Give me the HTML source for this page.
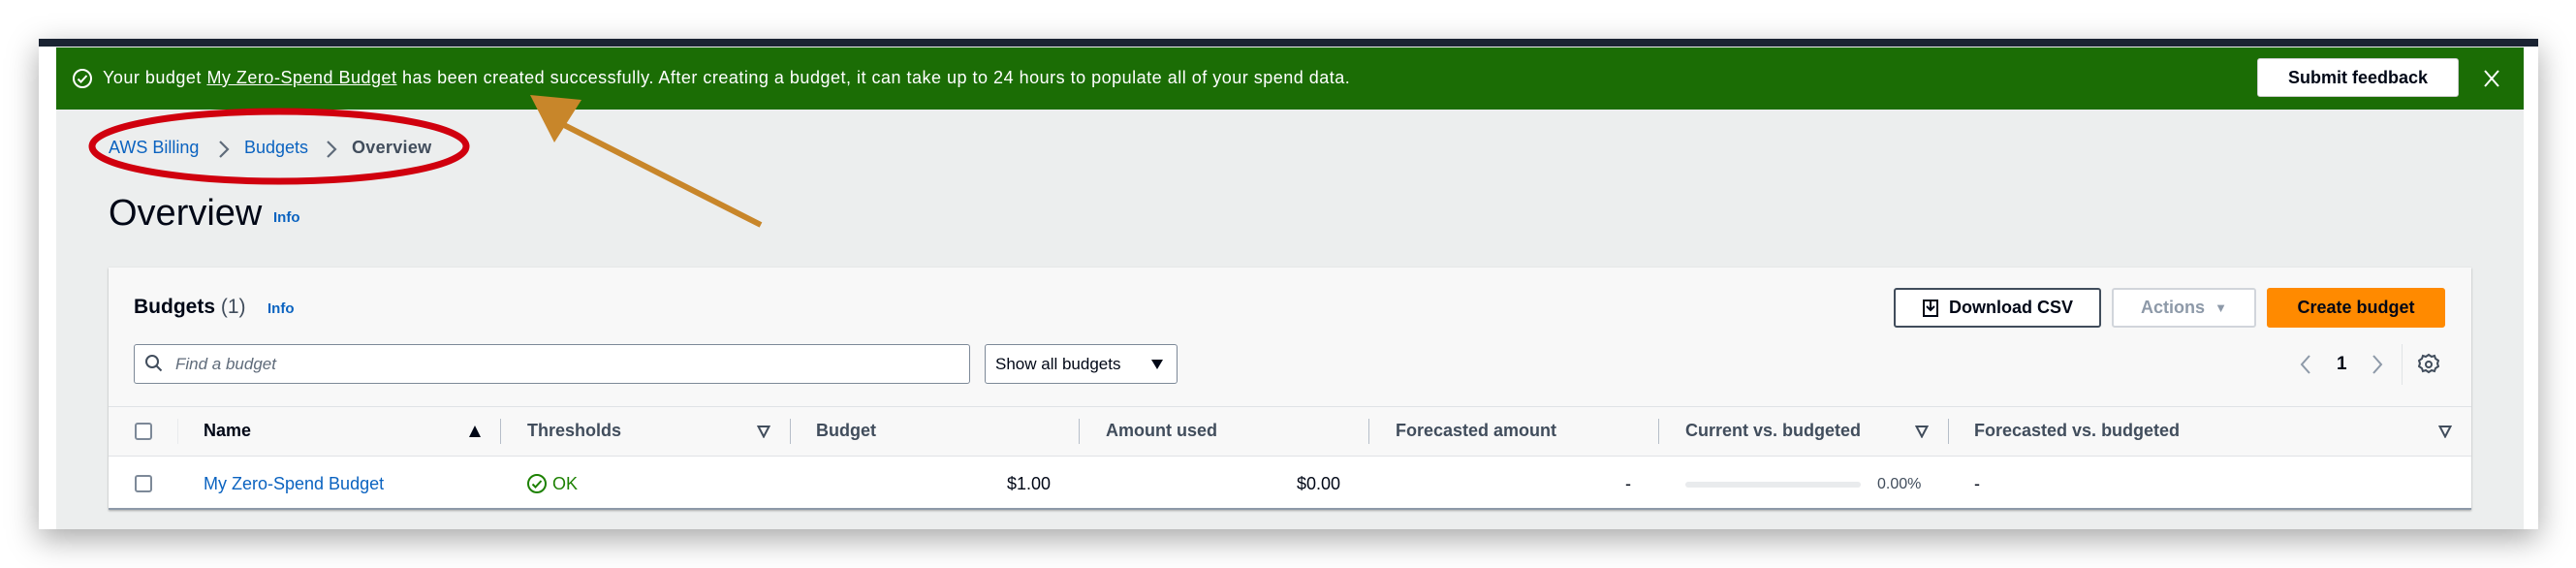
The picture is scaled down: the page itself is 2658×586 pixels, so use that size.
<!DOCTYPE html>
<html><head><meta charset="utf-8"><style>
*{margin:0;padding:0;box-sizing:border-box}
body{width:2658px;height:586px;background:#fff;position:relative;overflow:hidden;font-family:"Liberation Sans",sans-serif;color:#000716}
.a{position:absolute;white-space:nowrap}
.win{left:40px;top:40px;width:2579px;height:506px;background:#fff;box-shadow:0 10px 30px rgba(0,0,0,.35)}
.lk{color:#0b63c0}
.th{font-size:18px;font-weight:bold;color:#414d5c;top:434px}
.dv{width:1px;height:26px;background:#b6bec9;top:432px}
.btn{border:2px solid #414d5c;border-radius:3px;font-size:18px;font-weight:bold;display:flex;align-items:center;justify-content:center}
</style></head><body>
<div class="a win"></div>
<div class="a" style="left:40px;top:40px;width:2579px;height:8px;background:#1a2332"></div>
<div class="a" style="left:58px;top:48px;width:2546px;height:498px;background:#eceeee"></div>
<div class="a" style="left:2604px;top:48px;width:15px;height:498px;background:#fff"></div>
<div class="a" style="left:58px;top:49px;width:2546px;height:64px;background:#1b6d05"></div>
<svg class="a" style="left:74px;top:70px" width="22" height="22" viewBox="0 0 22 22"><circle cx="11" cy="11" r="9" fill="none" stroke="#fff" stroke-width="2"/><path d="M6.5 11.5l3 3 6-6.5" fill="none" stroke="#fff" stroke-width="2"/></svg>
<div class="a" style="left:106px;top:70px;font-size:18px;color:#fff;letter-spacing:0.5px">Your budget <u>My Zero-Spend Budget</u> has been created successfully. After creating a budget, it can take up to 24 hours to populate all of your spend data.</div>
<div class="a btn" style="left:2329px;top:60px;width:208px;height:40px;background:#fff;border:1px solid #ccc;color:#000716">Submit feedback</div>
<svg class="a" style="left:2562px;top:71px" width="18" height="20"><path d="M2 2L16 18M16 2L2 18" stroke="#fff" stroke-width="2"/></svg>
<div class="a" style="left:112px;top:142px;font-size:18px"><span class="lk">AWS Billing</span></div>
<svg class="a" style="left:224px;top:144px" width="14" height="20"><path d="M3 2l8 8-8 8" fill="none" stroke="#5f6b7a" stroke-width="2.2"/></svg>
<div class="a" style="left:252px;top:142px;font-size:18px"><span class="lk">Budgets</span></div>
<svg class="a" style="left:335px;top:144px" width="14" height="20"><path d="M3 2l8 8-8 8" fill="none" stroke="#5f6b7a" stroke-width="2.2"/></svg>
<div class="a" style="left:363px;top:142px;font-size:18px;font-weight:bold;color:#414d5c;letter-spacing:0.3px">Overview</div>
<svg class="a" style="left:0;top:0" width="2658" height="586">
<ellipse cx="288" cy="151" rx="193" ry="36" fill="none" stroke="#d0000e" stroke-width="7"/>
<line x1="785" y1="232" x2="580" y2="128" stroke="#c8862a" stroke-width="6"/>
<polygon points="547,98 600,103 572,147" fill="#c8862a"/>
</svg>
<div class="a" style="left:112px;top:199px;font-size:38px;color:#000716">Overview</div>
<div class="a lk" style="left:282px;top:216px;font-size:15px;font-weight:bold">Info</div>
<div class="a" style="left:112px;top:276px;width:2438px;height:250px;background:#f8f8f8;box-shadow:0 1px 2px rgba(0,0,0,.3)"></div>
<div class="a" style="left:112px;top:470px;width:2438px;height:56px;background:#fff;border-bottom:2px solid #8d99a8"></div>
<div class="a" style="left:112px;top:419px;width:2438px;height:1px;background:#e0e3e6"></div>
<div class="a" style="left:112px;top:470px;width:2438px;height:1px;background:#e0e3e6"></div>
<div class="a" style="left:138px;top:305px;font-size:21px;font-weight:bold">Budgets <span style="font-weight:normal;color:#414d5c">(1)</span></div>
<div class="a lk" style="left:276px;top:310px;font-size:15px;font-weight:bold">Info</div>
<div class="a" style="left:138px;top:355px;width:863px;height:41px;background:#fff;border:1px solid #7d8998;border-radius:3px"></div>
<svg class="a" style="left:149px;top:365px" width="20" height="22"><circle cx="8" cy="8" r="6" fill="none" stroke="#414d5c" stroke-width="2"/><path d="M12.5 12.5l5 5" stroke="#414d5c" stroke-width="2"/></svg>
<div class="a" style="left:181px;top:366px;font-size:17px;font-style:italic;color:#5f6b7a">Find a budget</div>
<div class="a" style="left:1016px;top:355px;width:199px;height:41px;background:#fff;border:1px solid #7d8998;border-radius:3px"></div>
<div class="a" style="left:1027px;top:366px;font-size:17px">Show all budgets</div>
<svg class="a" style="left:1186px;top:369px" width="16" height="14"><path d="M2 2h12l-6 10z" fill="#000716"/></svg>
<div class="a btn" style="left:1954px;top:297px;width:214px;height:41px;background:#fff;gap:10px"><svg width="18" height="20"><rect x="2" y="2" width="14" height="16" fill="none" stroke="#000716" stroke-width="2"/><path d="M9 3v9M5 8l4 4 4-4" fill="none" stroke="#000716" stroke-width="2"/></svg>Download CSV</div>
<div class="a btn" style="left:2179px;top:297px;width:149px;height:41px;background:#fff;border-color:#d1d5db;color:#8d99a8;gap:10px">Actions <span style="font-size:13px">▼</span></div>
<div class="a btn" style="left:2339px;top:297px;width:184px;height:41px;background:#ff8a00;border-color:#ff8a00;color:#000716">Create budget</div>
<svg class="a" style="left:2372px;top:365px" width="14" height="22"><path d="M11 2l-8 9 8 9" fill="none" stroke="#8d99a8" stroke-width="2"/></svg>
<div class="a" style="left:2411px;top:365px;font-size:19px;font-weight:bold">1</div>
<svg class="a" style="left:2446px;top:365px" width="14" height="22"><path d="M3 2l8 9-8 9" fill="none" stroke="#8d99a8" stroke-width="2"/></svg>
<div class="a" style="left:2478px;top:355px;width:1px;height:42px;background:#e0e3e6"></div>
<svg class="a" style="left:2495px;top:364px" width="22" height="24" viewBox="0 0 22 24"><path d="M11 2l3 2 3-1 1 3 3 2-1 3 1 3-3 2-1 3-3-1-3 2-3-2-3 1-1-3-3-2 1-3-1-3 3-2 1-3 3 1z" fill="none" stroke="#414d5c" stroke-width="2"/><circle cx="11" cy="12" r="3" fill="none" stroke="#414d5c" stroke-width="2"/></svg>
<div class="a" style="left:139px;top:436px;width:18px;height:18px;border:2px solid #7d8998;border-radius:3px;background:#fff"></div>
<div class="a" style="left:139px;top:490px;width:18px;height:18px;border:2px solid #7d8998;border-radius:3px;background:#fff"></div>
<div class="a dv" style="left:183px;background:#e9ebed"></div>
<div class="a th" style="left:210px;color:#000716">Name</div>
<svg class="a" style="left:483px;top:438px" width="14" height="14"><path d="M7 1l6 12H1z" fill="#000716"/></svg>
<div class="a dv" style="left:516px"></div>
<div class="a th" style="left:544px">Thresholds</div>
<svg class="a" style="left:781px;top:438px" width="14" height="14"><path d="M1.5 2h11L7 12.5z" fill="none" stroke="#414d5c" stroke-width="2"/></svg>
<div class="a dv" style="left:815px"></div>
<div class="a th" style="left:842px">Budget</div>
<div class="a dv" style="left:1113px"></div>
<div class="a th" style="left:1141px">Amount used</div>
<div class="a dv" style="left:1412px"></div>
<div class="a th" style="left:1440px">Forecasted amount</div>
<div class="a dv" style="left:1711px"></div>
<div class="a th" style="left:1739px">Current vs. budgeted</div>
<svg class="a" style="left:1976px;top:438px" width="14" height="14"><path d="M1.5 2h11L7 12.5z" fill="none" stroke="#414d5c" stroke-width="2"/></svg>
<div class="a dv" style="left:2010px"></div>
<div class="a th" style="left:2037px">Forecasted vs. budgeted</div>
<svg class="a" style="left:2516px;top:438px" width="14" height="14"><path d="M1.5 2h11L7 12.5z" fill="none" stroke="#414d5c" stroke-width="2"/></svg>
<div class="a lk" style="left:210px;top:489px;font-size:18px">My Zero-Spend Budget</div>
<svg class="a" style="left:543px;top:488px" width="22" height="22"><circle cx="11" cy="11" r="9" fill="none" stroke="#1d8102" stroke-width="2"/><path d="M6.5 11.5l3 3 6-6.5" fill="none" stroke="#1d8102" stroke-width="2"/></svg>
<div class="a" style="left:570px;top:489px;font-size:18px;color:#1d8102">OK</div>
<div class="a" style="left:1039px;top:489px;font-size:18px">$1.00</div>
<div class="a" style="left:1338px;top:489px;font-size:18px">$0.00</div>
<div class="a" style="left:1677px;top:489px;font-size:18px">-</div>
<div class="a" style="left:1739px;top:497px;width:181px;height:6px;background:#e9ebed;border-radius:3px"></div>
<div class="a" style="left:1937px;top:491px;font-size:16px;color:#414d5c">0.00%</div>
<div class="a" style="left:2037px;top:489px;font-size:18px">-</div>
</body></html>
